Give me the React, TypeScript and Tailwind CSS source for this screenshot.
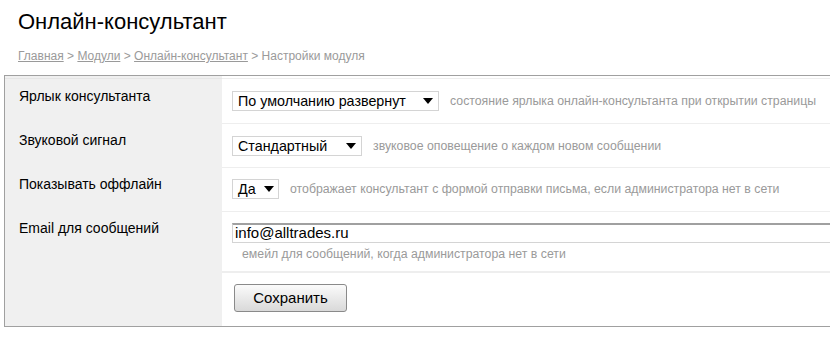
import React from "react";

const Arrow = () => (
  <svg width="10" height="6" viewBox="0 0 10 6" className="ml-[8px] shrink-0">
    <path d="M0 0 L10 0 L5 6 Z" fill="#000" />
  </svg>
);

function Select({ text, width }: { text: string; width: number }) {
  return (
    <div
      className="flex items-center h-[20px] border border-[#d4d4d4] bg-white pl-[5px] pr-[5px] text-[14.3px] leading-[18px] text-black justify-between shrink-0"
      style={{ width }}
    >
      <span className="whitespace-nowrap">{text}</span>
      <Arrow />
    </div>
  );
}

const Help = ({ children, className = "" }: { children: React.ReactNode; className?: string }) => (
  <div className={"text-[12.3px] leading-[14px] text-[#9a9a9a] whitespace-nowrap " + className}>{children}</div>
);

const Label = ({ children }: { children: React.ReactNode }) => (
  <div className="pl-[14px] pt-[10px] text-[14px] leading-[14px] text-black whitespace-nowrap">{children}</div>
);

export default function App() {
  return (
    <div
      className="w-[830px] h-[343px] bg-white overflow-hidden"
      style={{ fontFamily: '"Liberation Sans", Arial, sans-serif' }}
    >
      <h1 className="pl-[18px] pt-[7px] text-[22px] leading-[30px] text-black">Онлайн-консультант</h1>
      <div className="pl-[18px] mt-[12px] text-[12px] leading-[14px] text-[#9a9a9a] whitespace-nowrap">
        <span className="underline">Главная</span> &gt; <span className="underline">Модули</span> &gt;{" "}
        <span className="underline">Онлайн-консультант</span> &gt; Настройки модуля
      </div>
      <div className="ml-[4px] mt-[12px] w-[840px] border border-[#a0a0a0] flex">
        <div className="w-[217px] shrink-0 bg-[#f0f0f0] flex flex-col pt-[2px]">
          <div className="h-[45px] border-t border-[#e6e6e6]">
            <Label>Ярлык консультанта</Label>
          </div>
          <div className="h-[44px]">
            <Label>Звуковой сигнал</Label>
          </div>
          <div className="h-[44px]">
            <Label>Показывать оффлайн</Label>
          </div>
          <div className="h-[60px]">
            <Label>Email для сообщений</Label>
          </div>
          <div className="h-[55px]" />
        </div>
        <div className="flex-1 flex flex-col pt-[2px]">
          <div className="h-[45px] border-t border-[#eeeeee] pl-[10px] pt-[12px] flex items-start">
            <Select text="По умолчанию развернут" width={207} />
            <Help className="ml-[11px] mt-[3px]">состояние ярлыка онлайн-консультанта при открытии страницы</Help>
          </div>
          <div className="h-[44px] border-t border-[#eeeeee] pl-[10px] pt-[12px] flex items-start">
            <Select text="Стандартный" width={130} />
            <Help className="ml-[11px] mt-[3px]">звуковое оповещение о каждом новом сообщении</Help>
          </div>
          <div className="h-[44px] border-t border-[#eeeeee] pl-[10px] pt-[11px] flex items-start">
            <Select text="Да" width={47} />
            <Help className="ml-[11px] mt-[3px]">отображает консультант с формой отправки письма, если администратора нет в сети</Help>
          </div>
          <div className="h-[60px] border-t border-[#eeeeee] pl-[10px] pt-[11px] flex flex-col">
            <div className="h-[20px] w-[700px] border border-[#d4d4d4] border-t-2 border-t-[#a0a0a0] pl-[2px] text-[15px] leading-[16px] text-black">
              info@alltrades.ru
            </div>
            <Help className="pl-[10px] mt-[4px]">емейл для сообщений, когда администратора нет в сети</Help>
          </div>
          <div className="h-[55px] border-t-2 border-[#eeeeee] pl-[12px] pt-[11px]">
            <button className="w-[113px] h-[28px] rounded-[3px] border border-[#8a8a8a] bg-gradient-to-b from-[#fbfbfb] to-[#d9d9d9] text-[15px] text-black leading-[18px]">
              Сохранить
            </button>
          </div>
        </div>
      </div>
    </div>
  );
}
